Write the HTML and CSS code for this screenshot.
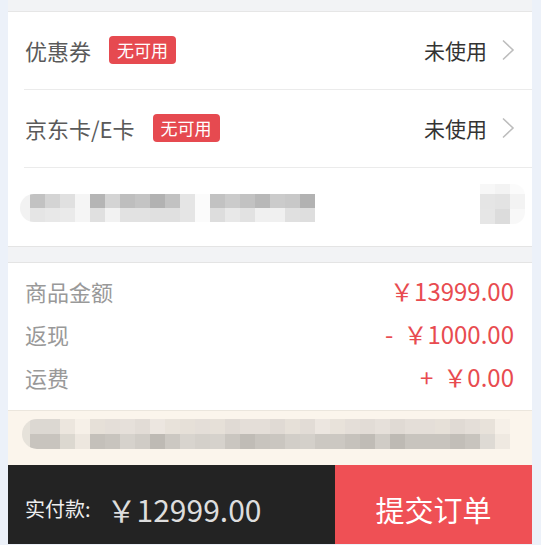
FILE: index.html
```html
<!DOCTYPE html>
<html lang="zh-CN">
<head>
  <meta charset="UTF-8" />
  <meta name="viewport" content="width=device-width, initial-scale=1.0"/>
  <title>确认订单</title>
  <link rel="stylesheet" href="styles.css">
</head>
<body>
  <div class="page">
    <div class="top-gap"></div>

    <!-- 优惠 -->
    <div class="card">
      <div class="row">
        <span class="label">优惠券</span>
        <span class="badge">无可用</span>
        <span class="state">未使用
          <svg class="arrow" viewBox="0 0 14 22" width="14" height="22"><path d="M2 1.5 L12 11 L2 20.5" fill="none" stroke="#bdbdbd" stroke-width="1.6"/></svg>
        </span>
      </div>
      <div class="row">
        <span class="label">京东卡/E卡</span>
        <span class="badge">无可用</span>
        <span class="state">未使用
          <svg class="arrow" viewBox="0 0 14 22" width="14" height="22"><path d="M2 1.5 L12 11 L2 20.5" fill="none" stroke="#bdbdbd" stroke-width="1.6"/></svg>
        </span>
      </div>
      <div class="row blur-row">
        <div class="mosaic m-left"></div>
        <div class="mosaic m-right"></div>
      </div>
    </div>

    <div class="band"></div>

    <!-- 金额 -->
    <div class="summary">
      <div class="line"><span class="name">商品金额</span><span class="money">￥13999.00</span></div>
      <div class="line"><span class="name">返现</span><span class="money"><i>-</i>￥1000.00</span></div>
      <div class="line"><span class="name">运费</span><span class="money"><i>+</i>￥0.00</span></div>
    </div>

    <div class="notice">
      <div class="mosaic m-notice"></div>
    </div>

    <!-- 底部栏 -->
    <div class="bar">
      <div class="total">
        <span class="total-label">实付款:</span>
        <span class="total-money">￥12999.00</span>
      </div>
      <a href="#" class="submit">提交订单</a>
    </div>
  </div>
</body>
</html>
```

FILE: styles.css
```css
/* Reset */
* {
  margin: 0;
  padding: 0;
  box-sizing: border-box;
}

body {
  background-color: #ecf1f9;
  font-family: "Noto Sans CJK SC", "Noto Sans", sans-serif;
}

.page {
  width: 524px;
  margin-left: 8px;
  background-color: #f2f3f5;
}

.top-gap {
  height: 12px;
  border-bottom: 1px solid #e6e6e6;
}

.card {
  background-color: #fff;
}

/* 列表行 */
.row {
  height: 78px;
  margin-left: 16px;
  padding: 0 17px 2px 1px;
  display: flex;
  align-items: center;
  border-bottom: 1px solid #ebebeb;
}

.label {
  font-size: 22px;
  color: #5a5a5a;
}

.badge {
  margin-left: 18px;
  height: 28px;
  padding: 0 8px;
  line-height: 28px;
  font-size: 17px;
  color: #fff;
  background-color: #e64a50;
  border-radius: 4px;
}

.state {
  margin-left: auto;
  display: flex;
  align-items: center;
  font-size: 21px;
  color: #333;
}

.arrow {
  margin-left: 14px;
}

/* 打码区域 */
.blur-row {
  margin-left: 0;
  padding: 0 7px 0 12px;
  border-bottom: none;
  justify-content: space-between;
}

.mosaic {
  flex: none;
}

.m-left {
  width: 295px;
  height: 28px;
  margin-top: 2px;
  border-radius: 14px 0 0 14px;
  background:
    linear-gradient(to right, #f2f2f2 0 10px, #c2c2c2 10px 25px, #d4d4d4 25px 40px, #e0e0e0 40px 55px, #f5f5f5 55px 70px, #b5b5b5 70px 85px, #d4d4d4 85px 100px, #bebebe 100px 115px, #c4c4c4 115px 130px, #b2b2b2 130px 145px, #c2c2c2 145px 160px, #e5e5e5 160px 175px, #fbfbfb 175px 190px, #c2c2c2 190px 205px, #cbcbcb 205px 220px, #c2c2c2 220px 235px, #b8b8b8 235px 250px, #cbcbcb 250px 265px, #c8c8c8 265px 280px, #b2b2b2 280px 295px) top / 100% 50% no-repeat,
    linear-gradient(to right, #f2f2f2 0 10px, #e5e5e5 10px 25px, #e8e8e8 25px 40px, #eaeaea 40px 55px, #f5f5f5 55px 70px, #e0e0e0 70px 85px, #f2f2f2 85px 100px, #e2e2e2 100px 130px, #e0e0e0 130px 160px, #e5e5e5 160px 175px, #fbfbfb 175px 190px, #dddddd 190px 205px, #e8e8e8 205px 220px, #e2e2e2 220px 235px, #f0f0f0 235px 265px, #e0e0e0 265px 280px, #dedede 280px 295px) bottom / 100% 50% no-repeat;
}

.m-right {
  width: 45px;
  height: 40px;
  margin-bottom: 6px;
  border-radius: 0 12px 12px 0;
  background:
    linear-gradient(to right, #f7f7f7 0 15px, #f3f3f3 15px 30px, #fbfbfb 30px 45px) 0 0 / 100% 10px no-repeat,
    linear-gradient(to right, #e5e5e5 0 15px, #e3e3e3 15px 30px, #f3f3f3 30px 45px) 0 10px / 100% 15px no-repeat,
    linear-gradient(to right, #e6e6e6 0 15px, #dcdcdc 15px 30px, #f8f8f8 30px 45px) 0 25px / 100% 15px no-repeat;
}

/* 灰色分隔 */
.band {
  height: 17px;
  border-top: 1px solid #e4e4e4;
  border-bottom: 1px solid #e4e4e4;
}

/* 金额明细 */
.summary {
  background-color: #fff;
  padding: 6px 18px 12px 17px;
}

.line {
  height: 43px;
  display: flex;
  align-items: center;
  justify-content: space-between;
}

.name {
  font-size: 22px;
  color: #999;
}

.money {
  font-size: 24px;
  color: #e84b50;
}

.money i {
  font-style: normal;
  margin-right: 10px;
}

/* 提示条 */
.notice {
  height: 55px;
  border-top: 1px solid #ebe6dd;
  background-color: #fbf5ec;
  padding: 8px 0 0 14px;
}

.m-notice {
  width: 488px;
  height: 30px;
  border-radius: 15px 0 0 15px;
  background:
    linear-gradient(to right, #e6e2da 0 8px, #dcd8d2 8px 38px, #ece6de 38px 53px, #f6f0e8 53px 68px, #e6e0d8 68px 83px, #e4ded8 83px 98px, #e6e0da 98px 113px, #e2dcd6 113px 128px, #ece6e0 128px 143px, #e8e2da 143px 158px, #e6e0d8 158px 173px, #e4ded8 173px 188px, #e6e0d8 188px 203px, #e0dad4 203px 218px, #e4ded8 218px 248px, #e0dad4 248px 263px, #e6e0d8 263px 278px, #e2dcd6 278px 293px, #ece6e0 293px 308px, #e8e2da 308px 323px, #e4ded8 323px 338px, #e2dcd6 338px 353px, #e6e0da 353px 368px, #e0dad4 368px 383px, #e4ded8 383px 413px, #e6e0d8 413px 428px, #e0dad4 428px 443px, #e4ded8 443px 458px, #e8e2da 458px 473px, #f6f0e8 473px 488px) top / 100% 50% no-repeat,
    linear-gradient(to right, #e6e2da 0 8px, #c8c4be 8px 38px, #dcd8d0 38px 53px, #ede7df 53px 68px, #c4c0ba 68px 83px, #c8c4be 83px 98px, #d6d2cc 98px 113px, #d0ccc6 113px 128px, #bebab4 128px 143px, #ccc8c2 143px 158px, #d8d4ce 158px 173px, #d4d0ca 173px 188px, #d6d2cc 188px 203px, #cac6c0 203px 218px, #c0bcb6 218px 233px, #c8c4be 233px 248px, #cac6c0 248px 263px, #d2cec8 263px 278px, #d4d0ca 278px 293px, #ccc8c2 293px 323px, #c6c2bc 323px 338px, #c0bcb6 338px 353px, #d0ccc6 353px 368px, #bebab4 368px 383px, #c8c4be 383px 428px, #c2beb8 428px 443px, #c8c4be 443px 458px, #dedad4 458px 473px, #efe9e1 473px 488px) bottom / 100% 50% no-repeat;
}

/* 底部栏 */
.bar {
  height: 79px;
  display: flex;
}

.total {
  flex: 1;
  background-color: #232323;
  display: flex;
  align-items: center;
  padding: 8px 0 0 17px;
}

.total-label {
  font-size: 20px;
  color: #eee;
}

.total-money {
  margin-left: 16px;
  font-size: 30px;
  color: #ddd;
}

.submit {
  width: 197px;
  background-color: #ef5055;
  color: #fff;
  font-size: 29px;
  text-decoration: none;
  display: flex;
  align-items: center;
  justify-content: center;
  padding-top: 8px;
}
```
